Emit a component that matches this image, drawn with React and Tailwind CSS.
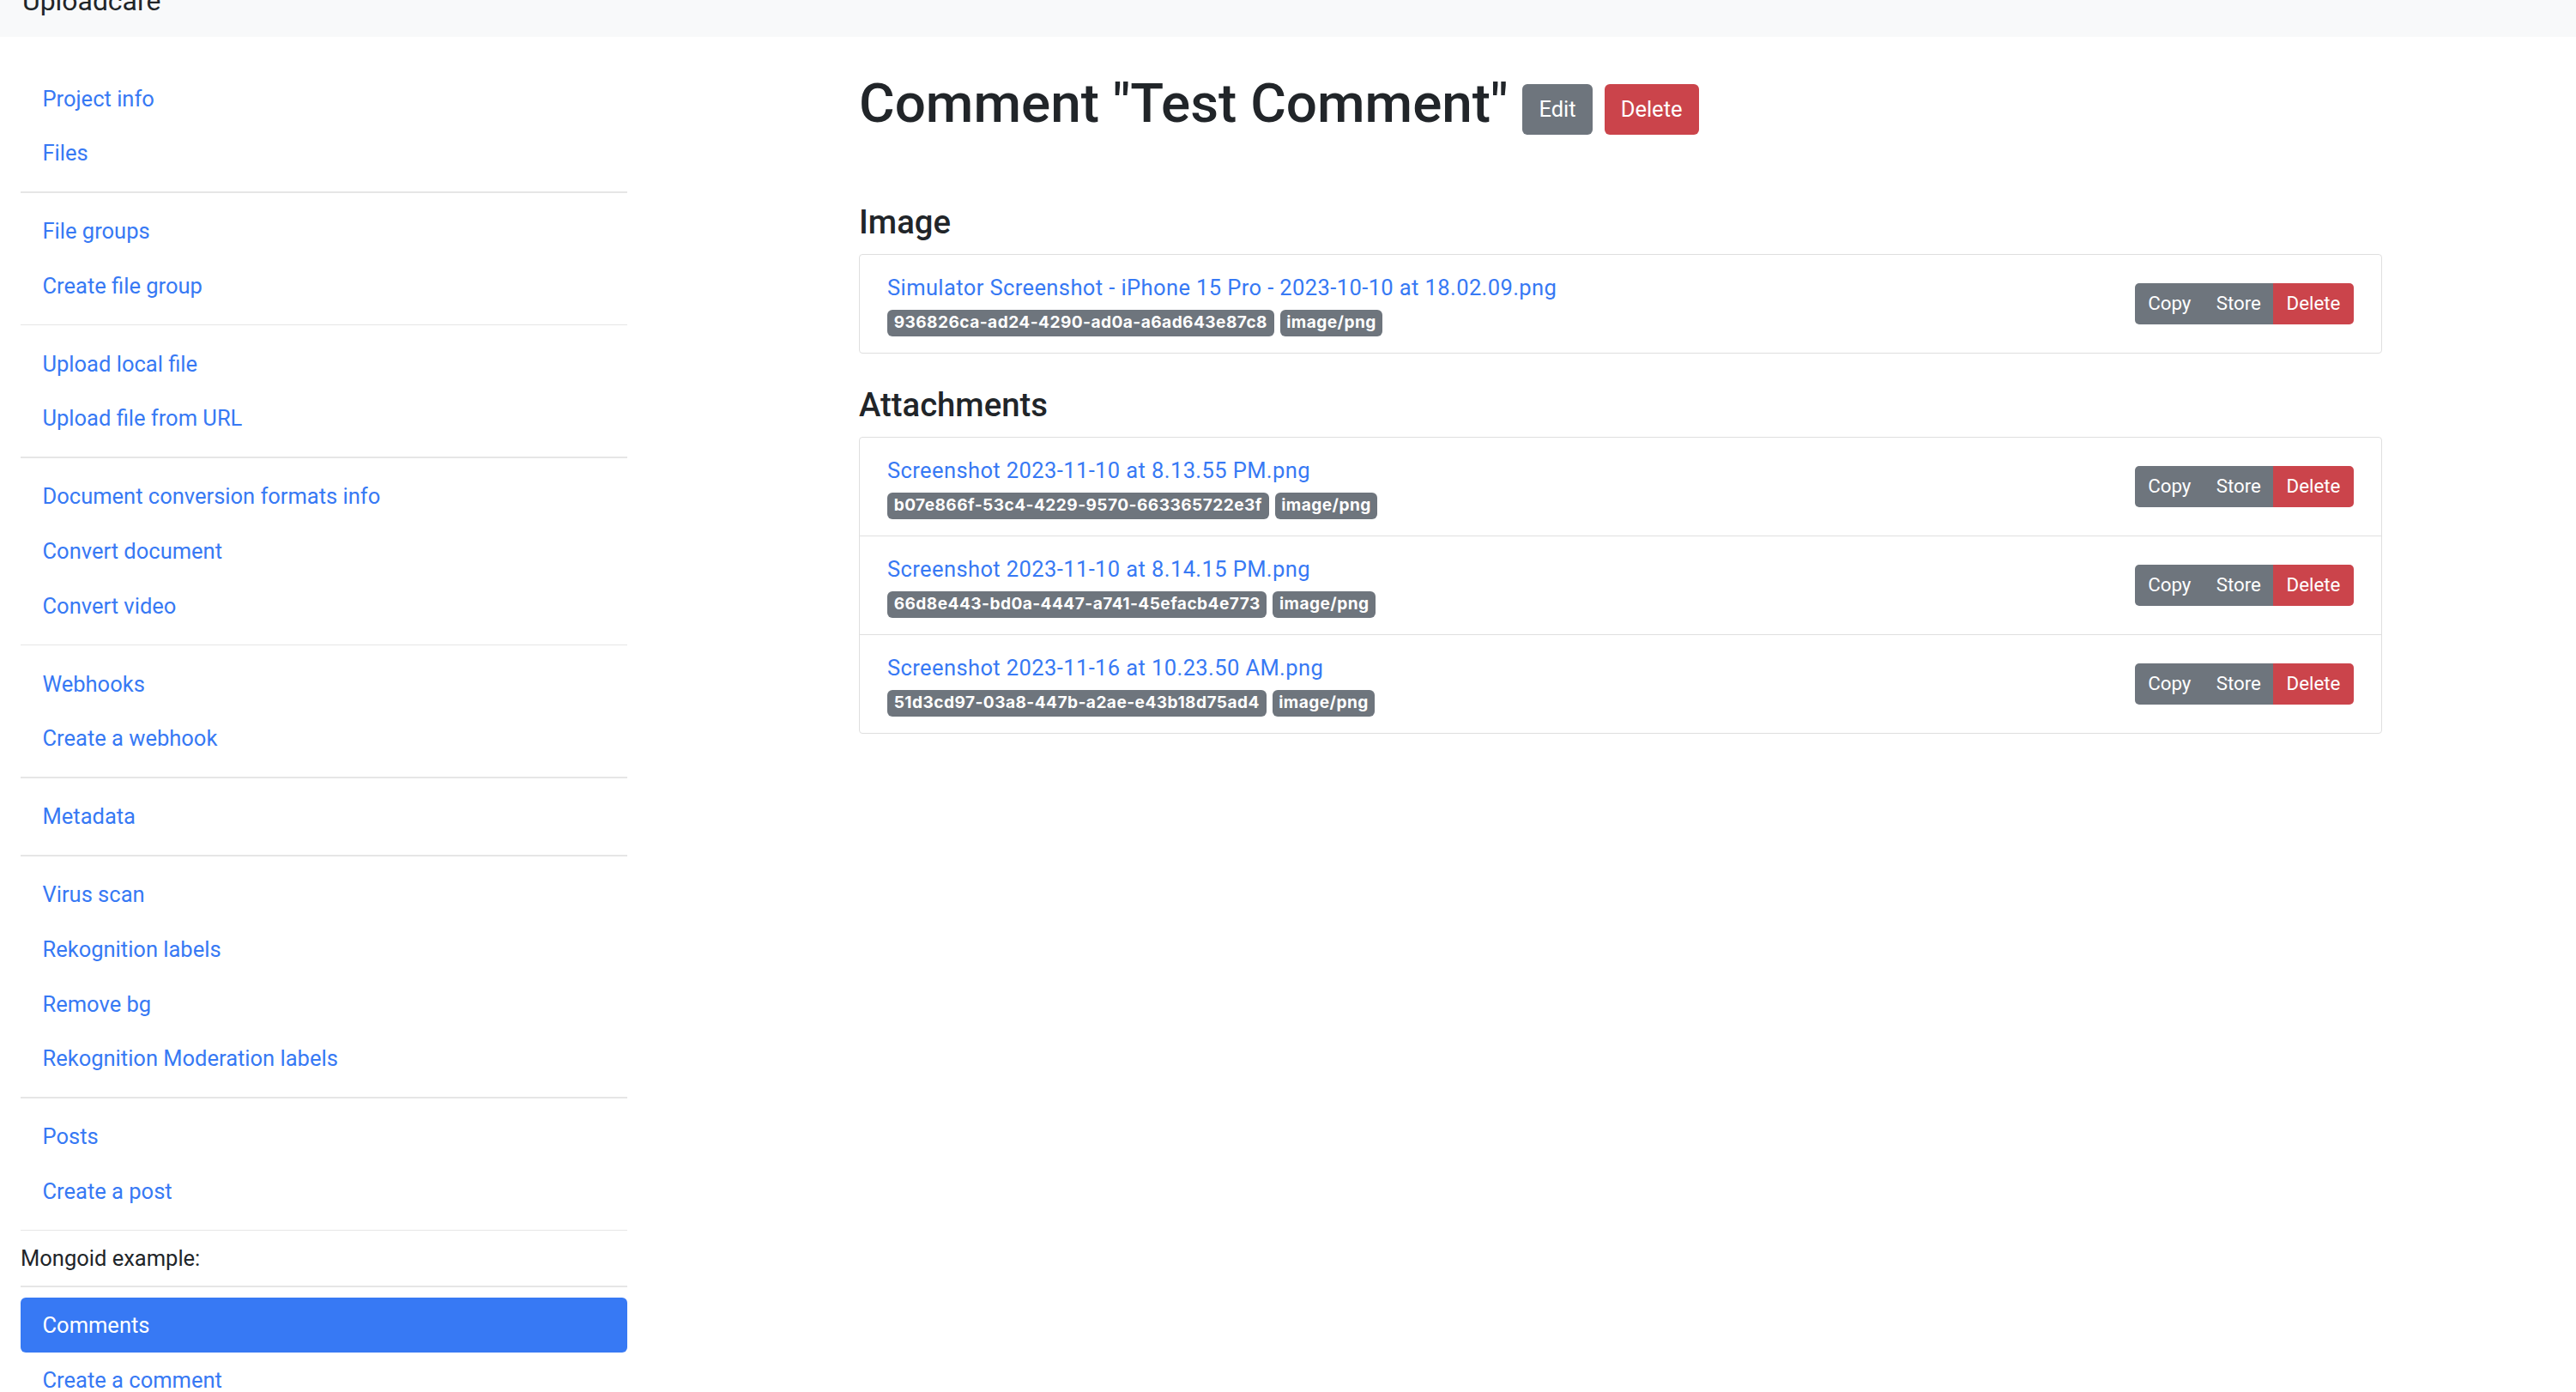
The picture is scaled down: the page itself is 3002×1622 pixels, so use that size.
import React from 'react';

const navGroups = [
  ['Project info', 'Files'],
  ['File groups', 'Create file group'],
  ['Upload local file', 'Upload file from URL'],
  ['Document conversion formats info', 'Convert document', 'Convert video'],
  ['Webhooks', 'Create a webhook'],
  ['Metadata'],
  ['Virus scan', 'Rekognition labels', 'Remove bg', 'Rekognition Moderation labels'],
  ['Posts', 'Create a post'],
];

const image = {
  name: 'Simulator Screenshot - iPhone 15 Pro - 2023-10-10 at 18.02.09.png',
  uuid: '936826ca-ad24-4290-ad0a-a6ad643e87c8',
};

const attachments = [
  { name: 'Screenshot 2023-11-10 at 8.13.55 PM.png', uuid: 'b07e866f-53c4-4229-9570-663365722e3f' },
  { name: 'Screenshot 2023-11-10 at 8.14.15 PM.png', uuid: '66d8e443-bd0a-4447-a741-45efacb4e773' },
  { name: 'Screenshot 2023-11-16 at 10.23.50 AM.png', uuid: '51d3cd97-03a8-447b-a2ae-e43b18d75ad4' },
];

const Divider = () => <div className="my-[12.75px] h-[1.6px] bg-[#e6e6e6]" />;

const NavLink = ({ children, active }) => (
  <a
    href="#"
    className={
      active
        ? 'block rounded-[6px] bg-[#3779f4] px-[25.5px] py-[12.75px] leading-[38.25px] text-white'
        : 'block px-[25.5px] py-[12.75px] leading-[38.25px] text-[#3779f4]'
    }
  >
    {children}
  </a>
);

const Badge = ({ children }) => (
  <span className="inline-block rounded-[6px] bg-[#6e757d] px-[7.65px] py-[5px] font-['Inter',sans-serif] text-[19.1px] font-bold leading-[19px] tracking-[0.45px] text-white">
    {children}
  </span>
);

const FileRow = ({ file, last }) => (
  <div className={`flex items-center justify-between px-[32px] py-[19px] ${last ? '' : 'border-b border-[#dfdfdf]'}`}>
    <div>
      <a href="#" className="block leading-[38px] tracking-[0.4px] text-[#3779f4]">{file.name}</a>
      <div className="flex h-[38px] gap-[7px] pt-[7px]">
        <Badge>{file.uuid}</Badge>
        <Badge>image/png</Badge>
      </div>
    </div>
    <div className="flex h-[48px] text-[22.3px] leading-[33.5px] text-white">
      <button className="w-[80.5px] rounded-l-[5px] bg-[#6e757d]">Copy</button>
      <button className="w-[80.5px] bg-[#6e757d]">Store</button>
      <button className="w-[94px] rounded-r-[5px] bg-[#cb444b]">Delete</button>
    </div>
  </div>
);

export default function App() {
  return (
    <div className="min-h-screen bg-white text-[25.5px] leading-[38.25px] text-[#212529]" style={{ fontFamily: 'Roboto, "Liberation Sans", sans-serif' }}>
      <div className="h-[43px] overflow-hidden bg-[#f8f9fa] px-[26px]">
        <div className="-mt-[23px] text-[31.9px] leading-[48px]">Uploadcare</div>
      </div>

      <div className="flex pt-[39.75px]">
        <aside className="ml-[24px] w-[707px] shrink-0">
          {navGroups.map((group, i) => (
            <div key={i}>
              {group.map((item) => (
                <NavLink key={item}>{item}</NavLink>
              ))}
              <Divider />
            </div>
          ))}
          <div className="leading-[38.25px]">Mongoid example:</div>
          <Divider />
          <NavLink active>Comments</NavLink>
          <NavLink>Create a comment</NavLink>
        </aside>

        <main className="ml-[270px] w-[1775px] shrink-0">
          <div className="flex items-start">
            <h1 className="text-[63.8px] font-medium leading-[76.5px]">Comment "Test Comment"</h1>
            <button className="ml-[17px] mt-[15.25px] h-[59px] rounded-[6px] bg-[#6e757d] px-[19px] text-white">Edit</button>
            <button className="ml-[14px] mt-[15.25px] h-[59px] rounded-[6px] bg-[#cb444b] px-[19px] text-white">Delete</button>
          </div>

          <h4 className="mt-[78px] mb-[12.75px] text-[38.25px] font-medium leading-[45.9px]">Image</h4>
          <div className="rounded-[4px] border border-[#dfdfdf]">
            <FileRow file={image} last />
          </div>

          <h4 className="mt-[38.25px] mb-[12.75px] text-[38.25px] font-medium leading-[45.9px]">Attachments</h4>
          <div className="rounded-[4px] border border-[#dfdfdf]">
            {attachments.map((file, i) => (
              <FileRow key={file.uuid} file={file} last={i === attachments.length - 1} />
            ))}
          </div>
        </main>
      </div>
    </div>
  );
}
